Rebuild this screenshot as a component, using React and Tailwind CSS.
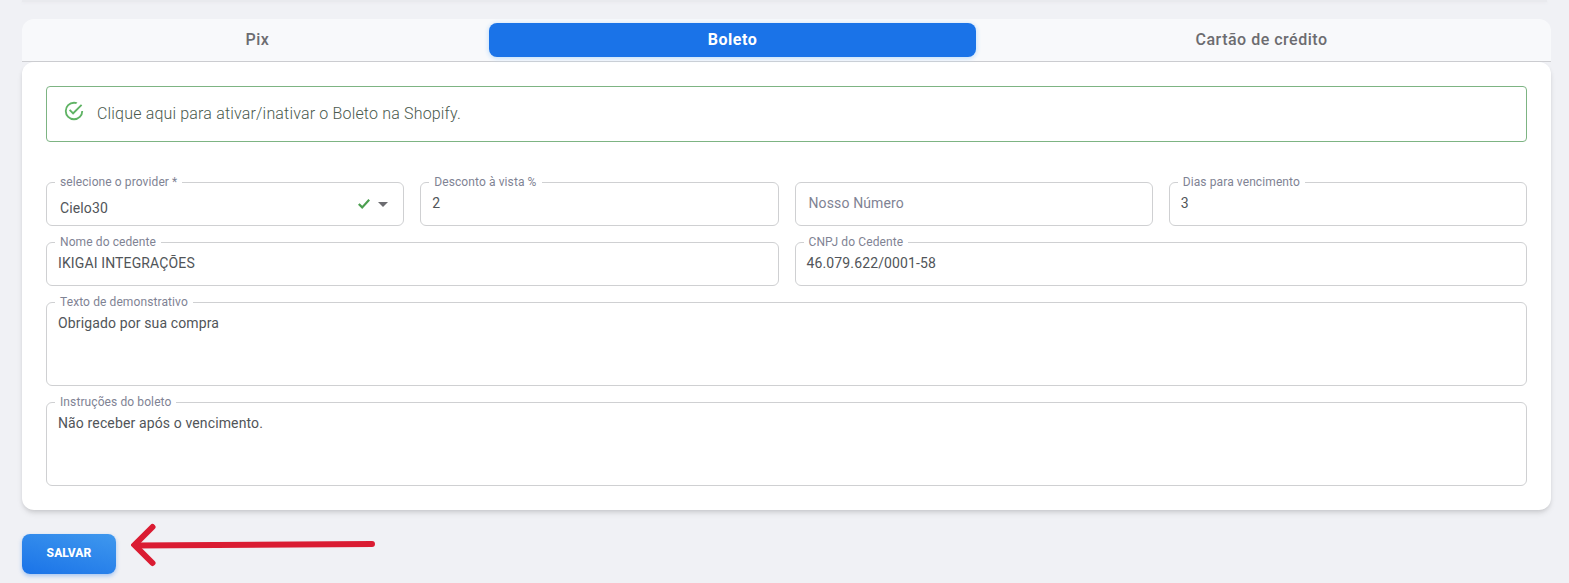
const tabs = [
  { name: 'Pix' },
  { name: 'Boleto', active: true },
  { name: 'Cartão de crédito' },
];

function Field({ label, value, className = 'h-11', children }) {
  return (
    <div className={`relative rounded-[6px] border border-[#cfd0d2] ${className}`}>
      {label && (
        <span className="absolute left-2 -top-[9px] bg-white px-[5px] text-xs leading-4 tracking-[0.1px] whitespace-nowrap text-[#7f8394]">
          {label}
        </span>
      )}
      {children || (
        <div className="px-[11px] pt-[10px] text-sm leading-5 tracking-[0.13px] text-[#515559]">{value}</div>
      )}
    </div>
  );
}

function Tabs() {
  return (
    <nav className="grid h-[43px] grid-cols-[463fr_487fr_571fr] rounded-t-xl border-b border-[#cdced2] bg-[#f8f9fb] p-1">
      {tabs.map((tab) => (
        <button
          key={tab.name}
          className={
            tab.active
              ? 'h-[34px] rounded-lg bg-[#1a73e8] text-base leading-6 font-bold tracking-[0.5px] text-white shadow-[0_1px_4px_1px_#c9e2fb]'
              : 'h-[34px] text-base leading-6 font-medium tracking-[0.5px] text-[#6c6c70]'
          }
        >
          {tab.name}
        </button>
      ))}
    </nav>
  );
}

export default function App() {
  return (
    <div className="h-[583px] w-[1569px] overflow-hidden bg-[#f0f1f5] font-['Roboto',sans-serif]">
      <div className="mx-[22px] h-[19px]">
        <div className="h-[2px] bg-[#e9eaee] shadow-[0_1px_3px_#e9eaee]" />
      </div>
      <main className="ml-[22px] w-[1529px]">
        <Tabs />
        <section className="flex h-[448px] flex-col rounded-xl bg-white p-6 shadow-[0_4px_6px_-1px_rgba(0,0,0,0.1),0_2px_4px_-1px_rgba(0,0,0,0.1)]">
          <div className="flex h-14 items-start rounded border border-[#7db483] pl-4 pt-[13px]">
            <svg className="size-[22px]" viewBox="0 0 24 24" fill="#5fb364">
              <path d="M20,12A8,8 0 0,1 12,20A8,8 0 0,1 4,12A8,8 0 0,1 12,4C12.76,4 13.5,4.11 14.2,4.31L15.77,2.74C14.61,2.26 13.34,2 12,2A10,10 0 0,0 2,12A10,10 0 0,0 12,22A10,10 0 0,0 22,12M7.91,10.08L6.5,11.5L11,16L21,6L19.59,4.58L11,13.17L7.91,10.08Z" />
            </svg>
            <p className="ml-3 mt-[2px] text-base leading-6 font-light tracking-[0.172px] text-[#4a5a4e]">
              Clique aqui para ativar/inativar o Boleto na Shopify.
            </p>
          </div>
          <div className="mt-10 grid grid-cols-4 gap-4">
            <Field label="selecione o provider *">
              <div className="flex h-full items-center pl-[13px] pr-[15px]">
                <span className="pt-[8px] text-sm leading-5 tracking-[0.13px] text-[#515559]">Cielo30</span>
                <svg className="ml-auto h-[10px] w-3" viewBox="0 0 12 10" fill="none" stroke="#4c9f50" strokeWidth="2.2">
                  <path d="M0.8 5L4.2 8.4L11.2 0.8" />
                </svg>
                <svg className="ml-2 h-[5px] w-[10px]" viewBox="0 0 10 5" fill="#6c6c70">
                  <path d="M0 0H10L5 5Z" />
                </svg>
              </div>
            </Field>
            <Field label="Desconto à vista %" value="2" />
            <Field>
              <div className="px-[13px] pt-[10px] text-sm leading-5 tracking-[0.13px] text-[#7f8394]">Nosso Número</div>
            </Field>
            <Field label="Dias para vencimento" value="3" />
            <Field className="col-span-2 h-11" label="Nome do cedente" value="IKIGAI INTEGRAÇÕES" />
            <Field className="col-span-2 h-11" label="CNPJ do Cedente" value="46.079.622/0001-58" />
            <Field className="col-span-4 h-[84px]" label="Texto de demonstrativo" value="Obrigado por sua compra" />
            <Field className="col-span-4 h-[84px]" label="Instruções do boleto" value="Não receber após o vencimento." />
          </div>
        </section>
        <div className="mt-6 flex items-start">
          <button className="h-10 w-[94px] rounded-lg bg-[linear-gradient(195deg,#3f98ee,#1a73e8)] pb-[3px] text-xs font-extrabold tracking-[0.1px] text-white shadow-[0_2px_4px_rgba(26,115,232,0.35)]">
            SALVAR
          </button>
          <svg
            className="-mt-[11px] ml-[15px] h-[44px] w-[246px]"
            viewBox="0 0 246 44"
            fill="none"
            stroke="#da1c32"
            strokeWidth="6"
            strokeLinecap="round"
          >
            <path d="M241 21L5 22.5" />
            <path d="M21.5 4L3.5 22L21.5 40" />
          </svg>
        </div>
      </main>
    </div>
  );
}
